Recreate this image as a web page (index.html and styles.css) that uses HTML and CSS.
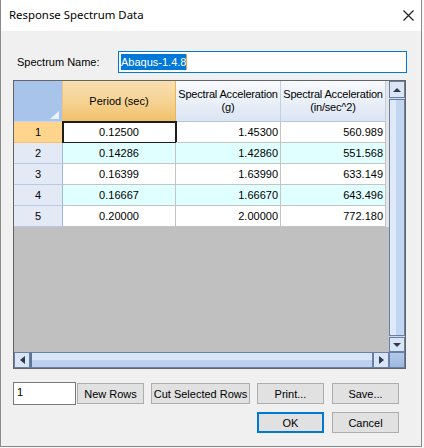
FILE: index.html
```html
<!DOCTYPE html>
<html>
<head>
<meta charset="utf-8">
<link rel="stylesheet" href="styles.css">
</head>
<body>
<div class="window">
  <div class="titlebar">
    <span class="title">Response Spectrum Data</span>
    <svg class="close" width="11" height="11" viewBox="0 0 11 11"><path d="M0.5 0.5 L10.5 10.5 M10.5 0.5 L0.5 10.5" stroke="#1a1a1a" stroke-width="1.1" fill="none"/></svg>
  </div>
  <div class="content">
    <div class="name-row">
      <span class="name-label">Spectrum Name:</span>
      <div class="name-box"><span class="sel">Abaqus-1.4.8</span><span class="caret"></span></div>
    </div>
    <div class="grid">
      <div class="grid-main">
        <div class="row head-row">
          <div class="corner-cell"><span class="tri"></span></div>
          <div class="hcell hcell-active">Period (sec)</div>
          <div class="hcell">Spectral Acceleration<br>(g)</div>
          <div class="hcell">Spectral Acceleration<br>(in/sec^2)</div>
        </div>
        <div class="row">
          <div class="rh rh-active">1</div>
          <div class="cell c-center cell-current">0.12500</div>
          <div class="cell">1.45300</div>
          <div class="cell">560.989</div>
        </div>
        <div class="row row-alt">
          <div class="rh">2</div>
          <div class="cell c-center">0.14286</div>
          <div class="cell">1.42860</div>
          <div class="cell">551.568</div>
        </div>
        <div class="row">
          <div class="rh">3</div>
          <div class="cell c-center">0.16399</div>
          <div class="cell">1.63990</div>
          <div class="cell">633.149</div>
        </div>
        <div class="row row-alt">
          <div class="rh">4</div>
          <div class="cell c-center">0.16667</div>
          <div class="cell">1.66670</div>
          <div class="cell">643.496</div>
        </div>
        <div class="row">
          <div class="rh">5</div>
          <div class="cell c-center">0.20000</div>
          <div class="cell">2.00000</div>
          <div class="cell">772.180</div>
        </div>
      </div>
      <div class="vscroll">
        <div class="sb-btn sb-up"><span class="arr arr-up"></span></div>
        <div class="vthumb"></div>
        <div class="sb-btn sb-down"><span class="arr arr-down"></span></div>
      </div>
      <div class="hscroll">
        <div class="sb-btn sb-left"><span class="arr arr-left"></span></div>
        <div class="hthumb"></div>
        <div class="sb-btn sb-right"><span class="arr arr-right"></span></div>
      </div>
      <div class="sb-corner"></div>
    </div>
    <div class="btn-row1">
      <div class="num-box">1</div>
      <button class="btn btn-new">New Rows</button>
      <button class="btn btn-cut">Cut Selected Rows</button>
      <button class="btn btn-print">Print...</button>
      <button class="btn btn-save">Save...</button>
    </div>
    <div class="btn-row2">
      <button class="btn btn-ok">OK</button>
      <button class="btn btn-cancel">Cancel</button>
    </div>
  </div>
</div>
</body>
</html>
```

FILE: styles.css
```css
html, body {
  margin: 0;
  padding: 0;
  background: #f7f7f7;
}
body {
  font-family: "Liberation Sans", Arial, sans-serif;
  font-size: 11px;
  color: #000;
}
.window {
  width: 422px;
  height: 447px;
  box-sizing: border-box;
  border: 1px solid #8a8a8a;
  border-top: 0;
  background: #f0f0f0;
  display: flex;
  flex-direction: column;
}
.titlebar {
  height: 31px;
  flex: 0 0 31px;
  background: #fff;
  display: flex;
  align-items: center;
  justify-content: space-between;
  padding: 0 7px 0 8px;
}
.title {
  font-family: "Noto Sans", "Open Sans", sans-serif;
  font-size: 11.4px;
  color: #000;
  position: relative;
  top: -1px;
}
.close {
  display: block;
  position: relative;
  top: 0px;
}
.content {
  padding: 20px 0 0 12px;
}
.name-row {
  display: flex;
  align-items: center;
  height: 22px;
}
.name-label {
  width: 105px;
  flex: 0 0 105px;
  box-sizing: border-box;
  padding-left: 4px;
}
.name-box {
  width: 289px;
  height: 22px;
  box-sizing: border-box;
  border: 1px solid #0078d7;
  background: #fff;
  padding-left: 2px;
  display: flex;
  align-items: center;
}
.sel {
  height: 16px;
  line-height: 16px;
  background: #0078d7;
  color: #fff;
}
.caret {
  width: 1px;
  height: 16px;
  background: #f0a040;
}
.grid {
  margin-top: 7px;
  width: 393px;
  height: 289px;
  box-sizing: border-box;
  border: 1px solid #646464;
  display: grid;
  grid-template-columns: 375px 16px;
  grid-template-rows: 271px 16px;
}
.grid-main {
  background: #c0c0c0;
  overflow: hidden;
  display: flex;
  flex-direction: column;
}
.row {
  display: grid;
  grid-template-columns: 49px 113px 105px 105px 3px;
  height: 21px;
  background: #fff;
}
.row::after {
  content: "";
  background: #e6e6e6;
}
.row-alt {
  background: #e0ffff;
}
.head-row {
  height: 41px;
  background: transparent;
}
.corner-cell {
  box-sizing: border-box;
  background: #a8c4ea;
  border-right: 1px solid #f2c27a;
  border-bottom: 1px solid #c3d5ee;
  display: flex;
  align-items: flex-end;
  justify-content: flex-end;
  padding: 0 3px 2px 0;
}
.tri {
  width: 0;
  height: 0;
  border-left: 9px solid transparent;
  border-bottom: 8px solid #eef3fa;
}
.hcell {
  box-sizing: border-box;
  background: linear-gradient(to bottom, #f7f9fd 0%, #eaf0f8 50%, #dbe5f3 100%);
  border-right: 1px solid #c2cfe2;
  border-bottom: 1px solid #b4c6df;
  display: flex;
  align-items: center;
  justify-content: center;
  text-align: center;
  line-height: 13px;
  letter-spacing: -0.18px;
  white-space: nowrap;
}
.hcell-active {
  background: linear-gradient(to bottom, #f9dfb1 0%, #f6d394 50%, #f0c16a 100%);
  border-right: 1px solid #eab45c;
  border-bottom: 1px solid #eab45c;
  letter-spacing: 0;
}
.rh {
  box-sizing: border-box;
  background: #e3eaf6;
  border-right: 1px solid #9fb9de;
  border-bottom: 1px solid #b7c9e3;
  text-align: center;
  line-height: 20px;
}
.rh-active {
  background: #ffd58e;
  border-right: 1px solid #f0b860;
  border-bottom: 1px solid #f0c27a;
}
.cell {
  box-sizing: border-box;
  border-right: 1px solid #c4c4c4;
  border-bottom: 1px solid #c4c4c4;
  text-align: right;
  padding-right: 2px;
  line-height: 20px;
}
.c-center {
  text-align: center;
  padding-right: 0;
}
.cell-current {
  outline: 2px solid #1c1c1c;
  outline-offset: -1px;
}
.vscroll {
  display: flex;
  flex-direction: column;
  background: #c9daf2;
}
.sb-btn {
  box-sizing: border-box;
  border: 1px solid #6a7fa4;
  background: #d9e5f6;
  display: flex;
  align-items: center;
  justify-content: center;
}
.sb-up {
  height: 17px;
  flex: 0 0 17px;
}
.sb-down {
  height: 15px;
  flex: 0 0 15px;
}
.vthumb {
  flex: 1;
  box-sizing: border-box;
  margin-top: 1px;
  margin-bottom: 1px;
  border: 1px solid #6a7fa4;
  background: linear-gradient(to right, #dfe9f8 0%, #dfe9f8 45%, #c3d6f1 45%, #c3d6f1 100%);
}
.hscroll {
  display: flex;
  background: #c9daf2;
}
.sb-left, .sb-right {
  width: 16px;
  flex: 0 0 16px;
}
.hthumb {
  flex: 1;
  box-sizing: border-box;
  border: 1px solid #6a7fa4;
  border-left: 2px solid #5d7397;
  background: linear-gradient(to bottom, #d8e5f8 0%, #d8e5f8 50%, #bdd1ef 50%, #bdd1ef 100%);
}
.sb-corner {
  box-sizing: border-box;
  border: 1px solid #6a7fa4;
  background: linear-gradient(to bottom, #b3c9ea, #9fb8e0);
}
.arr {
  width: 0;
  height: 0;
}
.arr-up {
  border-left: 4px solid transparent;
  border-right: 4px solid transparent;
  border-bottom: 4px solid #2e3a52;
}
.arr-down {
  border-left: 4px solid transparent;
  border-right: 4px solid transparent;
  border-top: 4px solid #2e3a52;
}
.arr-left {
  border-top: 4px solid transparent;
  border-bottom: 4px solid transparent;
  border-right: 5px solid #2e3a52;
}
.arr-right {
  border-top: 4px solid transparent;
  border-bottom: 4px solid transparent;
  border-left: 5px solid #2e3a52;
}
.btn-row1 {
  margin-top: 13px;
  display: flex;
  align-items: center;
  width: 386px;
}
.num-box {
  width: 63px;
  height: 23px;
  box-sizing: border-box;
  border: 1px solid #7a7a7a;
  background: #fff;
  padding: 2px 3px;
  line-height: 15px;
}
.btn {
  height: 21px;
  box-sizing: border-box;
  border: 1px solid #adadad;
  background: #e1e1e1;
  font-family: "Liberation Sans", Arial, sans-serif;
  font-size: 11px;
  color: #000;
  padding: 0;
  margin: 0;
  white-space: nowrap;
}
.btn-new { width: 67px; margin-left: 1px; }
.btn-cut { width: 99px; margin-left: 7px; }
.btn-print { width: 67px; margin-left: 7px; }
.btn-save { width: 67px; margin-left: 8px; }
.btn-row2 {
  margin-top: 7px;
  width: 386px;
  display: flex;
  justify-content: flex-end;
  gap: 8px;
}
.btn-ok {
  width: 67px;
  border: 2px solid #0078d7;
}
.btn-cancel {
  width: 67px;
}
```
